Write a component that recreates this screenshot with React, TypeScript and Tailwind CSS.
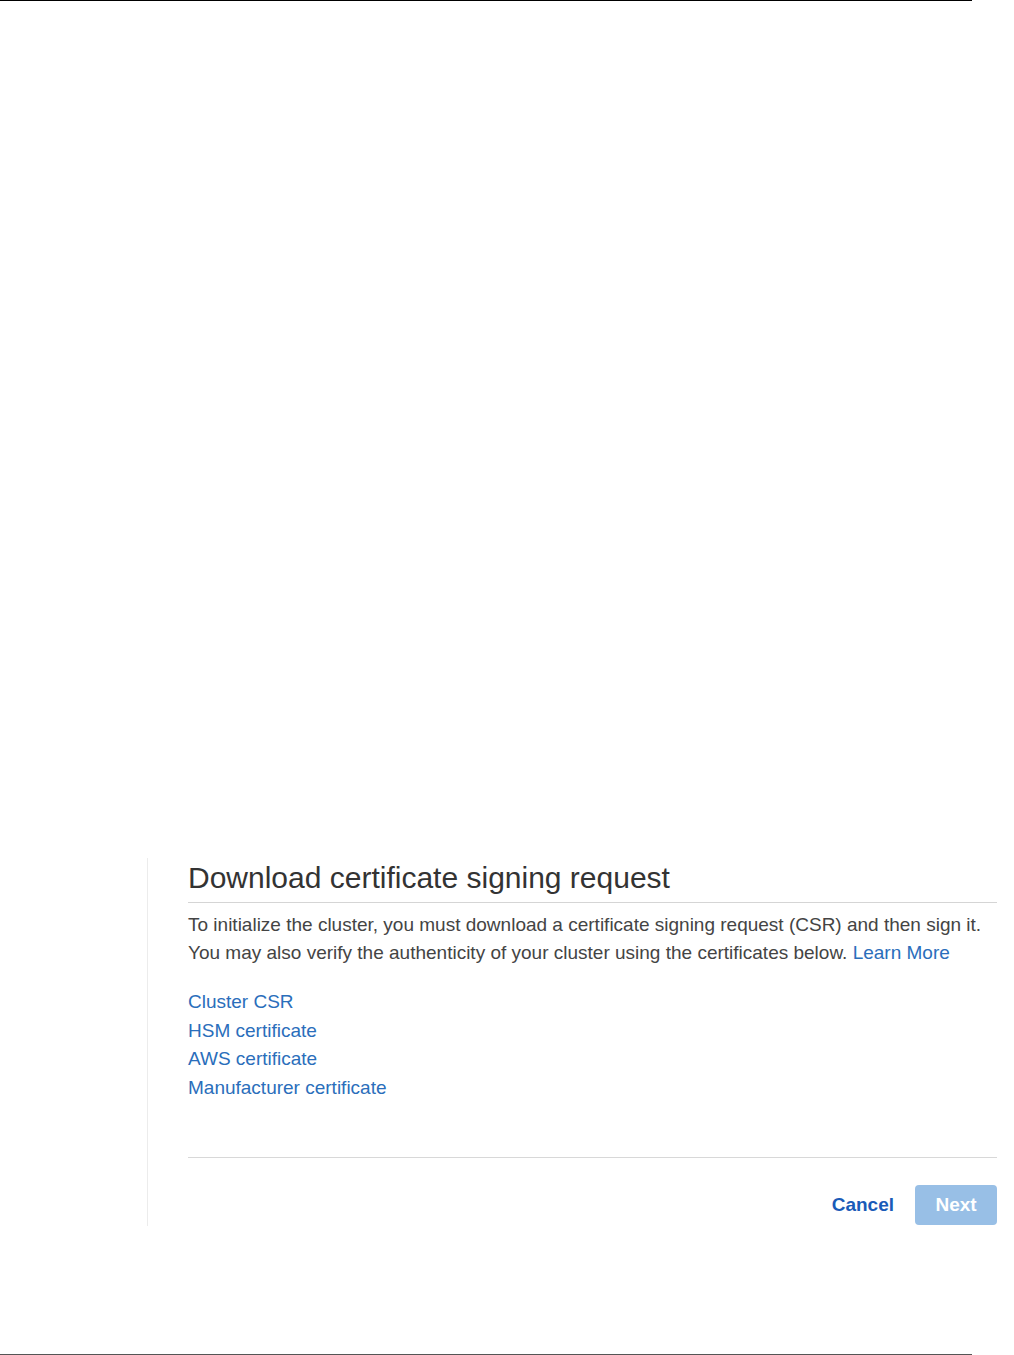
export default function App() {
  const font = { fontFamily: '"Liberation Sans", Arial, sans-serif' };
  return (
    <div className="w-[1014px] h-[1355px] bg-white flex flex-col" style={font}>
      <div className="h-px w-[972px] bg-black shrink-0" />
      <div className="h-[857px] shrink-0" />
      <div className="ml-[147px] border-l border-[#ececec] pl-[40px] pr-[17px] pt-[2px] h-[368px] flex flex-col">
        <h1 className="text-[30px] leading-[36px] text-[#333] font-normal pb-[6px] border-b border-[#d5d5d5]">
          Download certificate signing request
        </h1>
        <p className="text-[19px] leading-[28px] text-[#444] mt-[8px]">
          To initialize the cluster, you must download a certificate signing request (CSR) and then sign it.
          <br />
          You may also verify the authenticity of your cluster using the certificates below.{" "}
          <a className="text-[#2a6ebb]">Learn More</a>
        </p>
        <div className="flex flex-col mt-[21px] text-[19px] leading-[28.5px] text-[#2a6ebb]">
          <a>Cluster CSR</a>
          <a>HSM certificate</a>
          <a>AWS certificate</a>
          <a>Manufacturer certificate</a>
        </div>
        <div className="mt-[55px] border-t border-[#d8d8d8]" />
        <div className="flex justify-end items-center gap-[21px] mt-[27px]">
          <a className="text-[19px] font-bold text-[#1a5bb8]">Cancel</a>
          <button className="w-[82px] h-[40px] rounded-[4px] bg-[#98bfe6] text-white font-bold text-[19px]">
            Next
          </button>
        </div>
      </div>
      <div className="flex-1" />
      <div className="h-px w-[972px] bg-[#555] shrink-0" />
    </div>
  );
}
